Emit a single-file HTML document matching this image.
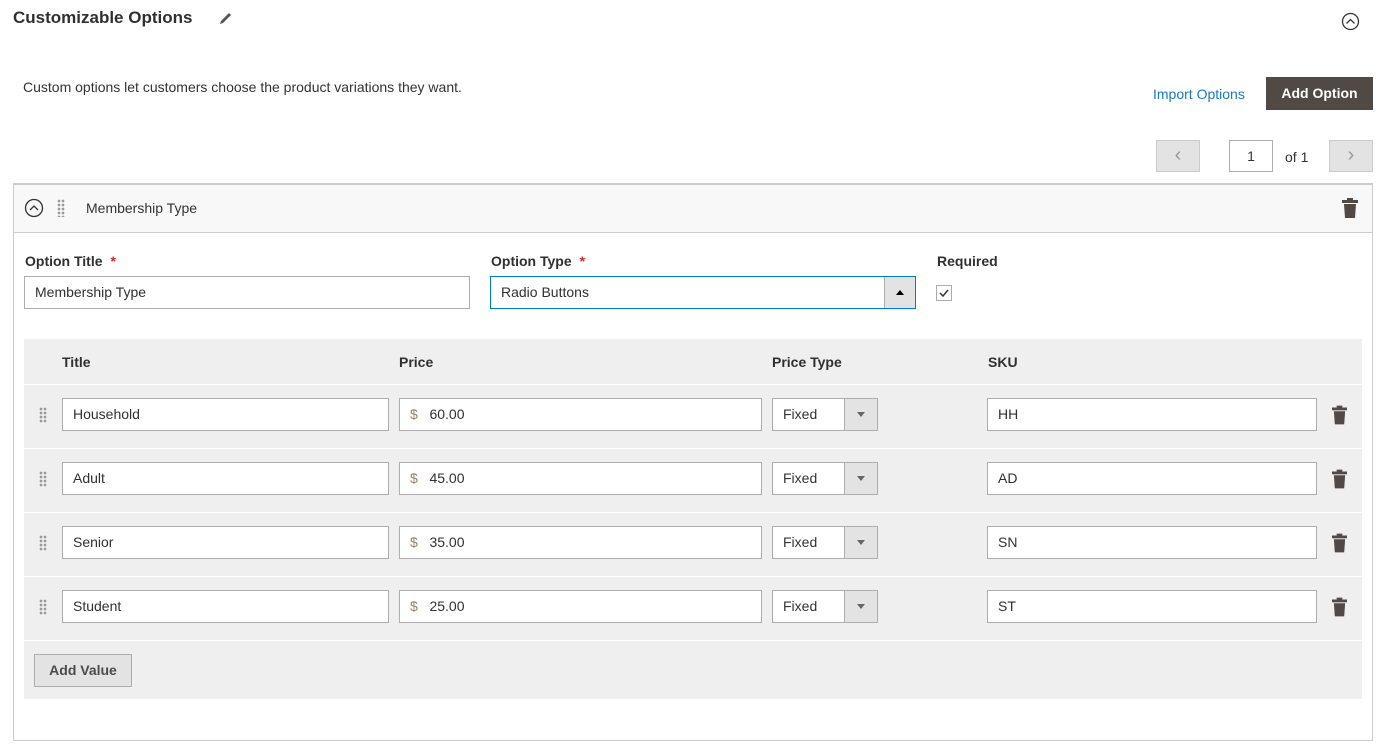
<!DOCTYPE html>
<html><head><style>
*{box-sizing:border-box;margin:0;padding:0}
body{width:1385px;height:754px;background:#fff;font-family:"Liberation Sans",sans-serif;color:#333;font-size:14px;position:relative;overflow:hidden}
.a{position:absolute}
.inp{position:absolute;background:#fff;border:1px solid #adadad;height:33px;line-height:31px;padding-left:10px;font-size:14px;color:#303030}
.lbl{position:absolute;font-weight:bold;font-size:14px;color:#303030}
.star{color:#e22626;margin-left:8px}
.grip{position:absolute;width:8px;height:16px;background:
 radial-gradient(circle,#999 1.3px,transparent 1.4px) 0 0/4px 4px}
.sel{position:absolute;width:106px;height:33px;border:1px solid #adadad;background:#fff}
.sel span{position:absolute;left:10px;top:7px}
.sel i{position:absolute;right:0;top:0;width:33px;height:31px;background:#e3e3e3;border-left:1px solid #adadad}
.sel i:after{content:"";position:absolute;left:12px;top:13px;border-left:4px solid transparent;border-right:4px solid transparent;border-top:5px solid #666}
.row{position:absolute;left:24px;width:1338px;height:63px;background:#efefef}
</style></head><body>
<div class="a" style="left:13px;top:8px;font-size:17px;font-weight:bold;color:#303030">Customizable Options</div>
<svg class="a" style="left:219px;top:11px" width="14" height="14" viewBox="0 0 14 14"><path d="M1 13l1-3 8-8 2 2-8 8z" fill="#555"/></svg>
<svg class="a" style="left:1341px;top:12px" width="19" height="19" viewBox="0 0 19 19"><circle cx="9.5" cy="9.5" r="8" fill="none" stroke="#333" stroke-width="1.3"/><path d="M5.5 11.5l4-4 4 4" fill="none" stroke="#333" stroke-width="1.3"/></svg>
<div class="a" style="left:23px;top:79px;font-size:14px">Custom options let customers choose the product variations they want.</div>
<div class="a" style="left:1153px;top:86px;color:#1979c3;font-size:14px">Import Options</div>
<div class="a" style="left:1266px;top:77px;width:107px;height:33px;background:#514943;color:#fff;font-weight:bold;line-height:33px;text-align:center;font-size:14px">Add Option</div>
<div class="a" style="left:1156px;top:140px;width:44px;height:32px;background:#e3e3e3;border:1px solid #ccc;color:#999;text-align:center;line-height:28px;font-size:20px">&#8249;</div>
<div class="a" style="left:1229px;top:140px;width:44px;height:32px;border:1px solid #adadad;text-align:center;line-height:30px">1</div>
<div class="a" style="left:1285px;top:149px">of 1</div>
<div class="a" style="left:1329px;top:140px;width:44px;height:32px;background:#e3e3e3;border:1px solid #ccc;color:#999;text-align:center;line-height:28px;font-size:20px">&#8250;</div>
<div class="a" style="left:13px;top:183px;width:1360px;height:558px;border:1px solid #ccc"></div>
<div class="a" style="left:14px;top:184px;width:1358px;height:49px;background:#f8f8f8;border-bottom:1px solid #ccc;border-top:1px solid #ccc"></div>
<svg class="a" style="left:24px;top:198px" width="20" height="20" viewBox="0 0 20 20"><circle cx="10" cy="10" r="8.5" fill="none" stroke="#333" stroke-width="1.3"/><path d="M6 12l4-4 4 4" fill="none" stroke="#333" stroke-width="1.3"/></svg>
<div class="grip" style="left:57px;top:199px;height:18px"></div>
<div class="a" style="left:86px;top:200px">Membership Type</div>
<svg class="a" style="left:1342px;top:198px" width="16" height="20" viewBox="0 0 16 20"><rect x="5" y="0" width="6" height="3" fill="#514943"/><rect x="0" y="2" width="16" height="3" fill="#514943"/><path d="M2 6h12l-1 14H3z" fill="#514943"/></svg>
<div class="lbl" style="left:25px;top:253px">Option Title<span class="star">*</span></div>
<div class="lbl" style="left:491px;top:253px">Option Type<span class="star">*</span></div>
<div class="lbl" style="left:937px;top:253px">Required</div>
<div class="inp" style="left:24px;top:276px;width:446px;height:33px">Membership Type</div>
<div class="inp" style="left:490px;top:276px;width:426px;height:33px;border-color:#007bdb">Radio Buttons</div>
<div class="a" style="left:884px;top:277px;width:31px;height:31px;background:#e3e3e3;border-left:1px solid #adadad"></div>
<div class="a" style="left:896px;top:290px;border-left:4px solid transparent;border-right:4px solid transparent;border-bottom:5px solid #000"></div>
<div class="a" style="left:936px;top:285px;width:16px;height:16px;border:1px solid #adadad;background:#fff"></div>
<svg class="a" style="left:938px;top:287px" width="12" height="12" viewBox="0 0 12 12"><path d="M2 6l3 3 5-6" fill="none" stroke="#333" stroke-width="1.5"/></svg>
<div class="a" style="left:24px;top:339px;width:1338px;height:45px;background:#efefef"></div>
<div class="lbl" style="left:62px;top:354px">Title</div>
<div class="lbl" style="left:399px;top:354px">Price</div>
<div class="lbl" style="left:772px;top:354px">Price Type</div>
<div class="lbl" style="left:988px;top:354px">SKU</div>

<div class="row" style="top:385px"></div>
<div class="row" style="top:449px"></div>
<div class="row" style="top:513px"></div>
<div class="row" style="top:577px"></div>
<div class="a" style="left:24px;top:641px;width:1338px;height:58px;background:#efefef"></div>

<!-- rows -->
<div class="grip" style="left:39px;top:407px"></div>
<div class="inp" style="left:62px;top:398px;width:327px">Household</div>
<div class="inp" style="left:399px;top:398px;width:363px"><span style="color:#a07e5b">$</span>&nbsp;&nbsp; 60.00</div>
<div class="sel" style="left:772px;top:398px"><span>Fixed</span><i></i></div>
<div class="inp" style="left:987px;top:398px;width:330px">HH</div>

<div class="grip" style="left:39px;top:471px"></div>
<div class="inp" style="left:62px;top:462px;width:327px">Adult</div>
<div class="inp" style="left:399px;top:462px;width:363px"><span style="color:#a07e5b">$</span>&nbsp;&nbsp; 45.00</div>
<div class="sel" style="left:772px;top:462px"><span>Fixed</span><i></i></div>
<div class="inp" style="left:987px;top:462px;width:330px">AD</div>

<div class="grip" style="left:39px;top:535px"></div>
<div class="inp" style="left:62px;top:526px;width:327px">Senior</div>
<div class="inp" style="left:399px;top:526px;width:363px"><span style="color:#a07e5b">$</span>&nbsp;&nbsp; 35.00</div>
<div class="sel" style="left:772px;top:526px"><span>Fixed</span><i></i></div>
<div class="inp" style="left:987px;top:526px;width:330px">SN</div>

<div class="grip" style="left:39px;top:599px"></div>
<div class="inp" style="left:62px;top:590px;width:327px">Student</div>
<div class="inp" style="left:399px;top:590px;width:363px"><span style="color:#a07e5b">$</span>&nbsp;&nbsp; 25.00</div>
<div class="sel" style="left:772px;top:590px"><span>Fixed</span><i></i></div>
<div class="inp" style="left:987px;top:590px;width:330px">ST</div>

<svg class="a" style="left:1332px;top:405px" width="15" height="20" viewBox="0 0 16 20"><rect x="5" y="0" width="6" height="3" fill="#514943"/><rect x="0" y="2" width="16" height="3" fill="#514943"/><path d="M2 6h12l-1 14H3z" fill="#514943"/></svg>
<svg class="a" style="left:1332px;top:469px" width="15" height="20" viewBox="0 0 16 20"><rect x="5" y="0" width="6" height="3" fill="#514943"/><rect x="0" y="2" width="16" height="3" fill="#514943"/><path d="M2 6h12l-1 14H3z" fill="#514943"/></svg>
<svg class="a" style="left:1332px;top:533px" width="15" height="20" viewBox="0 0 16 20"><rect x="5" y="0" width="6" height="3" fill="#514943"/><rect x="0" y="2" width="16" height="3" fill="#514943"/><path d="M2 6h12l-1 14H3z" fill="#514943"/></svg>
<svg class="a" style="left:1332px;top:597px" width="15" height="20" viewBox="0 0 16 20"><rect x="5" y="0" width="6" height="3" fill="#514943"/><rect x="0" y="2" width="16" height="3" fill="#514943"/><path d="M2 6h12l-1 14H3z" fill="#514943"/></svg>

<div class="a" style="left:34px;top:654px;width:98px;height:33px;background:#e3e3e3;border:1px solid #adadad;text-align:center;line-height:31px;font-weight:bold;color:#514943">Add Value</div>
</body></html>
